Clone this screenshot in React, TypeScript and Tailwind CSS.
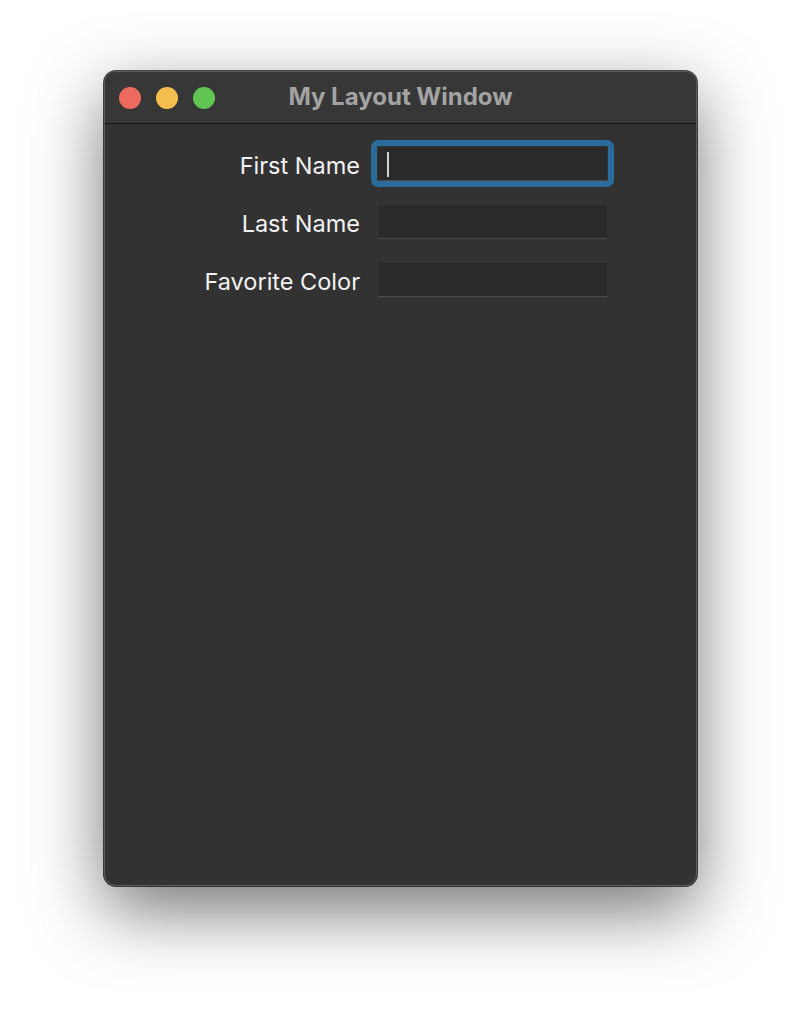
const fields = [
  { label: "First Name", focused: true },
  { label: "Last Name", focused: false },
  { label: "Favorite Color", focused: false },
];

export default function App() {
  return (
    <div
      className="w-[801px] h-[1024px] bg-white pt-[71px] pl-[104px] overflow-hidden"
      style={{ fontFamily: "Inter, 'Liberation Sans', sans-serif" }}
    >
      {/* Window */}
      <div className="w-[593px] h-[815px] rounded-[12px] border border-[#5c5c5c] bg-[#323232] overflow-hidden flex flex-col shadow-[0_0_0_1px_rgba(0,0,0,0.7),0_24px_70px_rgba(0,0,0,0.55)]">
        {/* Title bar */}
        <div className="relative h-[52px] shrink-0 bg-[#373737] border-b border-[#141414] flex items-center">
          <div className="flex items-center gap-[15px] pl-[14px]">
            <span className="w-[22px] h-[22px] rounded-full bg-[#ec6a5e]" />
            <span className="w-[22px] h-[22px] rounded-full bg-[#f4bf4f]" />
            <span className="w-[22px] h-[22px] rounded-full bg-[#61c554]" />
          </div>
          <div className="absolute inset-0 pb-[2px] flex items-center justify-center text-[24px] font-bold text-[#a3a3a3] pointer-events-none">
            My Layout Window
          </div>
        </div>

        {/* Form */}
        <div className="flex flex-col gap-[24px] pt-[23px]">
          {fields.map((f) => (
            <div key={f.label} className="flex items-center gap-[18px]">
              <label className="w-[255px] mt-[4px] text-right text-[23.5px] text-[#f2f2f2] leading-none">
                {f.label}
              </label>
              <div className="relative w-[229px] h-[34px] bg-[#2a2a2a] border-b border-[#4b4b4b]">
                {f.focused && (
                  <>
                    <span className="absolute -inset-[7px] rounded-[7px] border-[6px] border-[#2a6b9b]" />
                    <span className="absolute left-[9px] top-[5px] w-[2px] h-[25px] bg-[#d0d0d0]" />
                  </>
                )}
              </div>
            </div>
          ))}
        </div>
      </div>
    </div>
  );
}
